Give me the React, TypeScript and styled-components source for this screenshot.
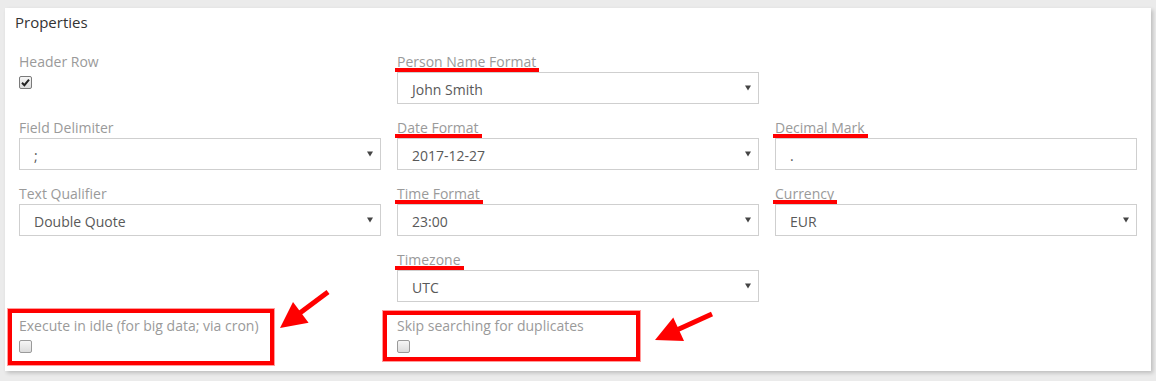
import React from "react";
import styled, { createGlobalStyle } from "styled-components";

const GlobalStyle = createGlobalStyle`
  body {
    margin: 0;
    background: #ebebeb;
    font-family: "Open Sans", "Liberation Sans", sans-serif;
  }
`;

const Page = styled.div`
  padding: 8px 5px 10px 5px;
`;

const Card = styled.div`
  position: relative;
  width: 1146px;
  box-sizing: border-box;
  background: #fff;
  padding: 4px 14px 18px 10px;
  box-shadow: 2px 2px 4px rgba(0, 0, 0, 0.2);
`;

const Title = styled.h3`
  margin: 0;
  font-size: 15px;
  line-height: 20px;
  font-weight: 400;
  color: #333;
`;

const Grid = styled.div`
  display: grid;
  grid-template-columns: repeat(3, 1fr);
  column-gap: 16px;
  row-gap: 14px;
  margin-top: 20px;
  padding-left: 4px;
`;

const Field = styled.div`
  display: flex;
  flex-direction: column;
  align-items: flex-start;
  min-width: 0;
`;

const Label = styled.label<{ $marked?: boolean }>`
  position: relative;
  display: inline-block;
  font-size: 14px;
  line-height: 20px;
  color: #9a9a9a;

  &::after {
    content: "";
    display: ${({ $marked }) => ($marked ? "block" : "none")};
    position: absolute;
    left: -2px;
    right: -3px;
    top: 16px;
    height: 4px;
    background: #ff0000;
  }
`;

const Control = styled.div`
  align-self: stretch;
  box-sizing: border-box;
  height: 32px;
  border: 1px solid #cfcfcf;
  background: #fff;
  display: flex;
  align-items: center;
  justify-content: space-between;
  padding: 0 7px 0 14px;
  font-size: 14px;
  color: #595959;
`;

const Value = styled.span`
  line-height: 20px;
  padding-top: 4px;
`;

const Caret = styled.svg`
  width: 6px;
  height: 6px;
  flex: none;
`;

const Box = styled.span<{ $checked?: boolean }>`
  display: flex;
  align-items: center;
  justify-content: center;
  margin-top: 4px;
  width: 13px;
  height: 13px;
  box-sizing: border-box;
  border: 1px solid ${({ $checked }) => ($checked ? "#7a7a7a" : "#9a9a9a")};
  border-radius: 2px;
  background: linear-gradient(#f6f6f6, #dcdcdc);
`;

const Callout = styled.div<{ $left: number; $top: number; $width: number; $height: number }>`
  position: absolute;
  left: ${({ $left }) => $left}px;
  top: ${({ $top }) => $top}px;
  width: ${({ $width }) => $width}px;
  height: ${({ $height }) => $height}px;
  box-sizing: border-box;
  border: 4px solid #ff0000;
  box-shadow: 0 0 0 1px rgba(255, 90, 90, 0.6);
  pointer-events: none;
`;

const ArrowSvg = styled.svg<{ $left: number; $top: number }>`
  position: absolute;
  left: ${({ $left }) => $left}px;
  top: ${({ $top }) => $top}px;
  overflow: visible;
  pointer-events: none;
`;

type Pt = [number, number];

const Arrow: React.FC<{ left: number; top: number; w: number; h: number; from: Pt; to: Pt }> = ({
  left,
  top,
  w,
  h,
  from,
  to,
}) => {
  const dx = to[0] - from[0];
  const dy = to[1] - from[1];
  const len = Math.hypot(dx, dy);
  const ux = dx / len;
  const uy = dy / len;
  const L = 26;
  const W = 13;
  const bx = to[0] - ux * L;
  const by = to[1] - uy * L;
  const nx = -uy;
  const ny = ux;
  const pts = `${to[0]},${to[1]} ${bx + nx * W},${by + ny * W} ${bx - nx * W},${by - ny * W}`;
  return (
    <ArrowSvg $left={left} $top={top} width={w} height={h} viewBox={`0 0 ${w} ${h}`}>
      <line x1={from[0]} y1={from[1]} x2={bx + ux * 2} y2={by + uy * 2} stroke="#ff0000" strokeWidth={5} />
      <polygon points={pts} fill="#ff0000" />
    </ArrowSvg>
  );
};

const Select: React.FC<{ value: string }> = ({ value }) => (
  <Control>
    <Value>{value}</Value>
    <Caret viewBox="0 0 6 6">
      <polygon points="0,0.5 6,0.5 3,5.5" fill="#444" />
    </Caret>
  </Control>
);

const Checkbox: React.FC<{ checked?: boolean }> = ({ checked }) => (
  <Box $checked={checked}>
    {checked && (
      <svg width="9" height="9" viewBox="0 0 9 9">
        <path d="M1 4.8 L3.4 7.2 L8 1.6" stroke="#222" strokeWidth="2" fill="none" />
      </svg>
    )}
  </Box>
);

const Empty = styled.div``;

export default function App() {
  return (
    <Page>
      <GlobalStyle />
      <Card>
        <Title>Properties</Title>
        <Grid>
          <Field>
            <Label>Header Row</Label>
            <Checkbox checked />
          </Field>
          <Field>
            <Label $marked>Person Name Format</Label>
            <Select value="John Smith" />
          </Field>
          <Empty />

          <Field>
            <Label>Field Delimiter</Label>
            <Select value=";" />
          </Field>
          <Field>
            <Label $marked>Date Format</Label>
            <Select value="2017-12-27" />
          </Field>
          <Field>
            <Label $marked>Decimal Mark</Label>
            <Control>
              <Value>.</Value>
            </Control>
          </Field>

          <Field>
            <Label>Text Qualifier</Label>
            <Select value="Double Quote" />
          </Field>
          <Field>
            <Label $marked>Time Format</Label>
            <Select value="23:00" />
          </Field>
          <Field>
            <Label $marked>Currency</Label>
            <Select value="EUR" />
          </Field>

          <Empty />
          <Field>
            <Label $marked>Timezone</Label>
            <Select value="UTC" />
          </Field>
          <Empty />

          <Field>
            <Label>Execute in idle (for big data; via cron)</Label>
            <Checkbox />
          </Field>
          <Field>
            <Label>Skip searching for duplicates</Label>
            <Checkbox />
          </Field>
          <Empty />
        </Grid>

        <Callout $left={3} $top={301} $width={266} $height={56} />
        <Callout $left={378} $top={303} $width={257} $height={50} />
        <Arrow left={265} top={277} w={65} h={50} from={[58, 7]} to={[10, 43]} />
        <Arrow left={640} top={297} w={75} h={45} from={[67, 9]} to={[10, 35]} />
      </Card>
    </Page>
  );
}
